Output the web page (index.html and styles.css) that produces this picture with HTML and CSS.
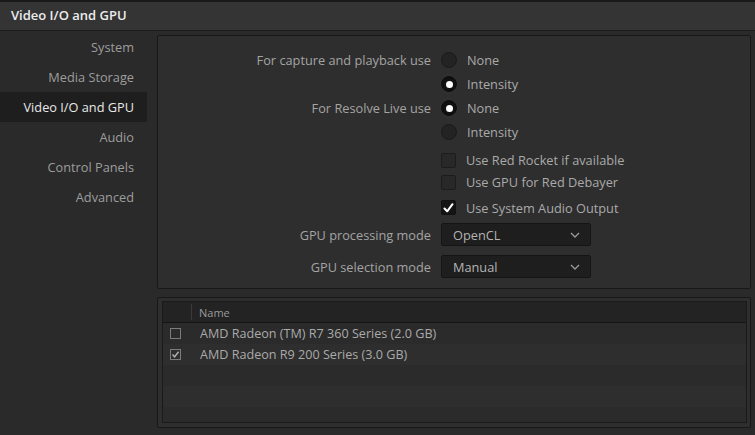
FILE: index.html
```html
<!DOCTYPE html>
<html>
<head>
<meta charset="utf-8">
<link rel="stylesheet" href="styles.css">
</head>
<body>
<div class="topline"></div>
<div class="header">Video I/O and GPU</div>
<div class="body">
  <nav class="sidebar">
    <div class="nav-item">System</div>
    <div class="nav-item">Media Storage</div>
    <div class="nav-item active">Video I/O and GPU</div>
    <div class="nav-item">Audio</div>
    <div class="nav-item">Control Panels</div>
    <div class="nav-item">Advanced</div>
  </nav>
  <main class="main">
    <section class="panel settings">
      <div class="row r-radio">
        <div class="label">For capture and playback use</div>
        <div class="control"><span class="radio"></span><span class="opt">None</span></div>
      </div>
      <div class="row r-radio">
        <div class="label"></div>
        <div class="control"><span class="radio on"></span><span class="opt">Intensity</span></div>
      </div>
      <div class="row r-radio">
        <div class="label">For Resolve Live use</div>
        <div class="control"><span class="radio on"></span><span class="opt">None</span></div>
      </div>
      <div class="row r-radio">
        <div class="label"></div>
        <div class="control"><span class="radio"></span><span class="opt">Intensity</span></div>
      </div>
      <div class="row r-check first-check">
        <div class="label"></div>
        <div class="control"><span class="check"></span><span class="opt">Use Red Rocket if available</span></div>
      </div>
      <div class="row r-check">
        <div class="label"></div>
        <div class="control"><span class="check"></span><span class="opt">Use GPU for Red Debayer</span></div>
      </div>
      <div class="row r-check third-check">
        <div class="label"></div>
        <div class="control"><span class="check on"><svg width="11" height="10" viewBox="0 0 11 10"><path d="M1.5 5.5 L4.2 8.3 L9.5 1.2" fill="none" stroke="#fff" stroke-width="2" stroke-linecap="round" stroke-linejoin="round"/></svg></span><span class="opt">Use System Audio Output</span></div>
      </div>
      <div class="row r-select sel1">
        <div class="label">GPU processing mode</div>
        <div class="control"><div class="select"><span>OpenCL</span><svg width="10" height="6" viewBox="0 0 10 6"><path d="M1 1 L5 5 L9 1" fill="none" stroke="#9a9a9a" stroke-width="1.3"/></svg></div></div>
      </div>
      <div class="row r-select sel2">
        <div class="label">GPU selection mode</div>
        <div class="control"><div class="select"><span>Manual</span><svg width="10" height="6" viewBox="0 0 10 6"><path d="M1 1 L5 5 L9 1" fill="none" stroke="#9a9a9a" stroke-width="1.3"/></svg></div></div>
      </div>
    </section>
    <section class="panel gpu-list">
      <div class="table">
        <div class="thead">
          <div class="c1"></div>
          <div class="c2">Name</div>
        </div>
        <div class="trow">
          <div class="c1"><span class="tcheck"></span></div>
          <div class="c2">AMD Radeon (TM) R7 360 Series (2.0 GB)</div>
        </div>
        <div class="trow alt">
          <div class="c1"><span class="tcheck"><svg width="9" height="9" viewBox="0 0 9 9"><path d="M1.5 4.5 L3.6 6.8 L7.6 1.8" fill="none" stroke="#b0b0b0" stroke-width="1.4"/></svg></span></div>
          <div class="c2">AMD Radeon R9 200 Series (3.0 GB)</div>
        </div>
        <div class="trow"></div>
        <div class="trow alt"></div>
        <div class="trow"></div>
      </div>
    </section>
  </main>
</div>
</body>
</html>
```

FILE: styles.css
```css
* { box-sizing: border-box; }
html, body {
  margin: 0;
  padding: 0;
  width: 755px;
  height: 435px;
  overflow: hidden;
  background: #2a2a2a;
  font-family: "Open Sans", "Noto Sans", sans-serif;
  font-size: 12.75px;
  color: #a0a0a0;
}
.topline {
  height: 2px;
  background: #1a1a1a;
}
.header {
  height: 29px;
  background: #343434;
  border-bottom: 1px solid #1c1c1c;
  padding-left: 11px;
  display: flex;
  align-items: center;
  color: #ececec;
  font-weight: 600;
  font-size: 13px;
  padding-bottom: 2px;
}
.body {
  display: flex;
  align-items: flex-start;
}
.sidebar {
  width: 147px;
  flex: none;
  padding-top: 1px;
}
.nav-item {
  height: 30px;
  display: flex;
  align-items: center;
  justify-content: flex-end;
  padding-right: 13px;
  color: #9d9d9d;
}
.nav-item.active {
  background: #1e1e1e;
  color: #e8e8e8;
}
.main {
  margin-left: 10px;
  width: 594px;
  display: flex;
  flex-direction: column;
  gap: 8px;
  margin-top: 4px;
}
.panel {
  background: #2e2e2e;
  border: 1px solid #181818;
  border-radius: 2px;
}
.settings {
  height: 254px;
  padding-top: 12px;
}
.row {
  display: flex;
  align-items: center;
}
.label {
  width: 273px;
  text-align: right;
  flex: none;
  color: #a4a4a4;
}
.control {
  margin-left: 10px;
  display: flex;
  align-items: center;
}
.r-radio { height: 24px; }
.r-check { height: 22px; }
.first-check { margin-top: 5px; }
.third-check { margin-top: 3px; height: 23px; }
.r-select { height: 23px; }
.sel1 { margin-top: 4px; }
.sel2 { margin-top: 9px; }
.opt {
  margin-left: 10px;
  color: #aaaaaa;
}
.radio {
  width: 16px;
  height: 16px;
  border-radius: 50%;
  background: #232323;
  border: 1px solid #1b1b1b;
  display: flex;
  align-items: center;
  justify-content: center;
}
.radio.on {
  background: #101010;
  border-color: #0c0c0c;
  box-shadow: 0 0 0 1px #333;
}
.radio.on::after {
  content: "";
  width: 7px;
  height: 7px;
  border-radius: 50%;
  background: #fff;
}
.check {
  width: 15px;
  height: 15px;
  background: #282828;
  border: 1px solid #1c1c1c;
  border-radius: 2px;
  display: flex;
  align-items: center;
  justify-content: center;
}
.check.on {
  background: #141414;
  border-color: #111;
}
.select {
  width: 150px;
  height: 23px;
  background: #1e1e1e;
  border: 1px solid #151515;
  border-radius: 2px;
  display: flex;
  align-items: center;
  justify-content: space-between;
  padding: 0 10px 0 11px;
  color: #b4b4b4;
}
.gpu-list {
  height: 131px;
  padding: 3px 3px 4px 4px;
}
.table {
  height: 100%;
  border: 1px solid #1a1a1a;
  background: #2b2b2b;
  overflow: hidden;
}
.thead {
  height: 21px;
  background: #232323;
  border-bottom: 1px solid #151515;
  display: flex;
  align-items: stretch;
  font-size: 11px;
  color: #9a9a9a;
}
.thead .c1 {
  width: 29px;
  border-right: 1px solid #3a3a3a;
  margin: 2px 0;
}
.thead .c2 {
  padding-left: 7px;
  display: flex;
  align-items: center;
}
.trow {
  height: 21px;
  display: flex;
  align-items: center;
  background: #2b2b2b;
  color: #aaaaaa;
  font-size: 12.6px;
}
.trow.alt { background: #2e2e2e; }
.trow .c1 {
  width: 37px;
  padding-left: 7px;
  display: flex;
  align-items: center;
}
.tcheck {
  width: 11px;
  height: 11px;
  border: 1px solid #7c7c7c;
  display: flex;
  align-items: center;
  justify-content: center;
}
```
